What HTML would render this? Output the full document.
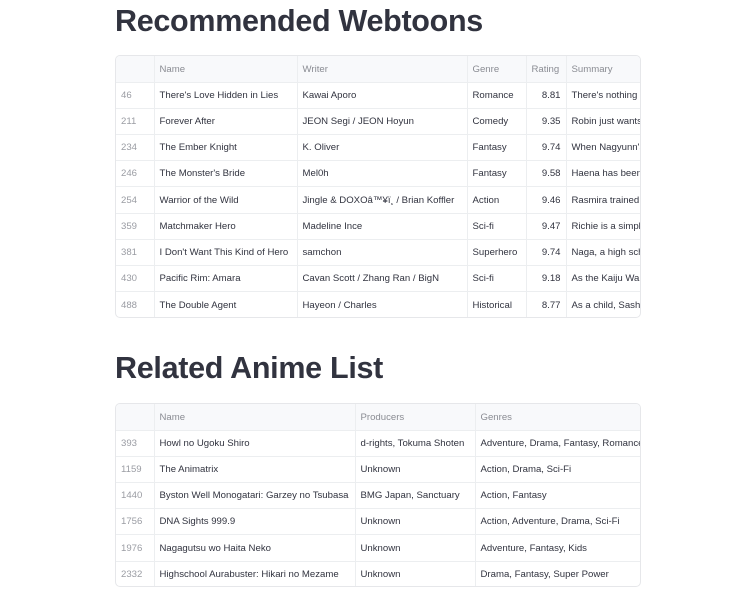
<!DOCTYPE html>
<html><head><meta charset="utf-8"><style>
body{margin:0;background:#fff;width:735px;height:614px;overflow:hidden;font-family:"Liberation Sans",sans-serif;color:#31333f}
h1{position:absolute;left:115px;margin:0;font-size:30.5px;font-weight:700;color:#31333f;letter-spacing:-0.3px}
.t{position:absolute;left:115px;width:526px;border:1px solid #e6e7ea;border-radius:5px;overflow:hidden;box-sizing:border-box}
table{border-collapse:collapse;table-layout:fixed;font-size:9.6px;white-space:nowrap}
td,th{height:26.2px;padding:0 5px;border-right:1px solid #eceef0;border-bottom:1px solid #eceef0;overflow:hidden;text-align:left;box-sizing:border-box}
th{background:#f8f9fb;color:#8a8c93;font-weight:normal;padding-top:2px}
td.i{color:#9a9ca3}
td.r{text-align:right}
tr:last-child td{border-bottom:none}
</style></head><body>
<h1 style="top:4px">Recommended Webtoons</h1>
<div class="t" style="top:55px;height:263px">
<table style="width:540px">
<colgroup><col style="width:38px"><col style="width:143px"><col style="width:170px"><col style="width:59px"><col style="width:40px"><col style="width:90px"></colgroup>
<tr><th></th><th>Name</th><th>Writer</th><th>Genre</th><th>Rating</th><th>Summary</th></tr>
<tr><td class="i">46</td><td>There's Love Hidden in Lies</td><td>Kawai Aporo</td><td>Romance</td><td class="r">8.81</td><td>There's nothing</td></tr>
<tr><td class="i">211</td><td>Forever After</td><td>JEON Segi / JEON Hoyun</td><td>Comedy</td><td class="r">9.35</td><td>Robin just wants</td></tr>
<tr><td class="i">234</td><td>The Ember Knight</td><td>K. Oliver</td><td>Fantasy</td><td class="r">9.74</td><td>When Nagyunn's</td></tr>
<tr><td class="i">246</td><td>The Monster's Bride</td><td>Mel0h</td><td>Fantasy</td><td class="r">9.58</td><td>Haena has been</td></tr>
<tr><td class="i">254</td><td>Warrior of the Wild</td><td>Jingle &amp; DOXOâ™¥ï¸ / Brian Koffler</td><td>Action</td><td class="r">9.46</td><td>Rasmira trained</td></tr>
<tr><td class="i">359</td><td>Matchmaker Hero</td><td>Madeline Ince</td><td>Sci-fi</td><td class="r">9.47</td><td>Richie is a simple</td></tr>
<tr><td class="i">381</td><td>I Don't Want This Kind of Hero</td><td>samchon</td><td>Superhero</td><td class="r">9.74</td><td>Naga, a high school</td></tr>
<tr><td class="i">430</td><td>Pacific Rim: Amara</td><td>Cavan Scott / Zhang Ran / BigN</td><td>Sci-fi</td><td class="r">9.18</td><td>As the Kaiju War</td></tr>
<tr><td class="i">488</td><td>The Double Agent</td><td>Hayeon / Charles</td><td>Historical</td><td class="r">8.77</td><td>As a child, Sasha</td></tr>
</table></div>
<h1 style="top:351px">Related Anime List</h1>
<div class="t" style="top:403px;height:184px">
<table style="width:540px">
<colgroup><col style="width:38px"><col style="width:201px"><col style="width:120px"><col style="width:181px"></colgroup>
<tr><th></th><th>Name</th><th>Producers</th><th>Genres</th></tr>
<tr><td class="i">393</td><td>Howl no Ugoku Shiro</td><td>d-rights, Tokuma Shoten</td><td>Adventure, Drama, Fantasy, Romance</td></tr>
<tr><td class="i">1159</td><td>The Animatrix</td><td>Unknown</td><td>Action, Drama, Sci-Fi</td></tr>
<tr><td class="i">1440</td><td>Byston Well Monogatari: Garzey no Tsubasa</td><td>BMG Japan, Sanctuary</td><td>Action, Fantasy</td></tr>
<tr><td class="i">1756</td><td>DNA Sights 999.9</td><td>Unknown</td><td>Action, Adventure, Drama, Sci-Fi</td></tr>
<tr><td class="i">1976</td><td>Nagagutsu wo Haita Neko</td><td>Unknown</td><td>Adventure, Fantasy, Kids</td></tr>
<tr><td class="i">2332</td><td>Highschool Aurabuster: Hikari no Mezame</td><td>Unknown</td><td>Drama, Fantasy, Super Power</td></tr>
</table></div>
</body></html>
